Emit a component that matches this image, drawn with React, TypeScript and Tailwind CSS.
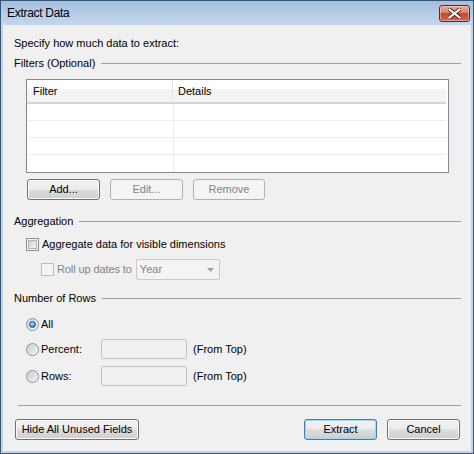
import React from "react";

type BtnProps = {
  label: string;
  widthClass: string;
  disabled?: boolean;
  isDefault?: boolean;
};

function WinButton({ label, widthClass, disabled, isDefault }: BtnProps) {
  const base =
    "h-[21px] rounded-[3px] border flex items-center justify-center text-[11px] leading-none shrink-0";
  if (disabled) {
    return (
      <div className={`${base} ${widthClass} border-[#adb2b5] bg-[#f4f4f4] text-[#838383]`}>
        {label}
      </div>
    );
  }
  if (isDefault) {
    return (
      <div
        className={`${base} ${widthClass} border-[#3c7fb1] bg-[linear-gradient(#f2f2f2,#ebebeb_50%,#dddddd_50%,#cfcfcf)] shadow-[inset_0_0_0_1px_#9fd7f5] text-black`}
      >
        {label}
      </div>
    );
  }
  return (
    <div
      className={`${base} ${widthClass} border-[#707070] bg-[linear-gradient(#f2f2f2,#ebebeb_50%,#dddddd_50%,#cfcfcf)] shadow-[inset_0_0_0_1px_#fcfcfc] text-black`}
    >
      {label}
    </div>
  );
}

function GroupLabel({ label, className }: { label: string; className: string }) {
  return (
    <div className={`flex items-center h-[13px] mr-[10px] ${className}`}>
      <span className="leading-[13px] whitespace-nowrap">{label}</span>
      <span className="flex-1 h-px bg-[#a0a0a0] ml-[6px]" />
    </div>
  );
}

function CheckBox({ disabled }: { disabled?: boolean }) {
  if (disabled) {
    return (
      <span className="w-[13px] h-[13px] border border-[#bcbcbc] bg-[#f4f4f4] shrink-0 block" />
    );
  }
  return (
    <span className="w-[13px] h-[13px] border border-[#8e8f8f] bg-[#f4f4f4] p-[1px] shrink-0 block">
      <span className="block w-full h-full border border-[#aeb3b9] bg-[linear-gradient(135deg,#cbcfd5,#f6f6f6)]" />
    </span>
  );
}

function Radio({ checked }: { checked?: boolean }) {
  return (
    <span className="w-[13px] h-[13px] rounded-full border border-[#8e8f8f] bg-[linear-gradient(135deg,#d0d3d8,#fafafa)] flex items-center justify-center shrink-0">
      {checked ? (
        <span className="w-[7px] h-[7px] rounded-full border border-[#1c4f86] bg-[radial-gradient(circle_at_40%_35%,#c8ecff,#3e9ae0_55%,#1f5da0)]" />
      ) : (
        <span className="w-[9px] h-[9px] rounded-full bg-[linear-gradient(135deg,#c7cbd1,#f4f4f4)]" />
      )}
    </span>
  );
}

function DisabledBox() {
  return <span className="w-[86px] h-[20px] border border-[#c2c2c2] bg-[#f0f0f0] rounded-[2px] shrink-0 block" />;
}

function FilterTable() {
  const rows = [0, 1, 2, 3];
  return (
    <div className="w-[423px] h-[94px] ml-[12px] mt-[9px] border border-[#828790] bg-white flex flex-col">
      <div className="h-[24px] flex bg-[linear-gradient(#ffffff,#ffffff_42%,#f3f4f6_42%,#f3f4f6)] border-b-2 border-[#d5d5d5] mr-[2px]">
        <div className="w-[146px] pl-[6px] flex items-center border-r border-[#e3e5e8] leading-none">
          Filter
        </div>
        <div className="flex-1 pl-[5px] flex items-center leading-none">Details</div>
      </div>
      {rows.map((r) => (
        <div
          key={r}
          className={`h-[17px] flex mr-[2px] ${r < 3 ? "border-b border-[#ededed]" : ""}`}
        >
          <div className="w-[147px] border-r border-[#ededed]" />
          <div className="flex-1" />
        </div>
      ))}
    </div>
  );
}

function CloseButton() {
  return (
    <div className="w-[31px] h-[17px] rounded-[3px] border border-[#6d1f14] bg-[linear-gradient(#e9a99b,#d9816e_45%,#c7472f_50%,#d2664a)] shadow-[inset_0_0_0_1px_rgba(255,210,200,0.55)] flex items-center justify-center">
      <svg width="13" height="11" viewBox="0 0 13 11">
        <path
          d="M1.5 1.5 L11.5 9.5 M11.5 1.5 L1.5 9.5"
          stroke="#5a1a12"
          strokeWidth="4"
          strokeLinecap="square"
        />
        <path
          d="M1.5 1.5 L11.5 9.5 M11.5 1.5 L1.5 9.5"
          stroke="#ffffff"
          strokeWidth="2.2"
          strokeLinecap="square"
        />
      </svg>
    </div>
  );
}

export default function App() {
  return (
    <div className="w-[474px] h-[454px] border border-[#3a5676] bg-[#bcd3ea] flex flex-col text-[11px] text-black font-['Liberation_Sans',Arial,sans-serif]">
      {/* title bar */}
      <div className="h-[24px] flex items-center justify-between pl-[6px] pr-[3px] bg-[linear-gradient(#a3bddc,#b8cfe9_60%,#c1d6ee)]">
        <span className="text-[12px] tracking-[-0.3px] text-black leading-none">Extract Data</span>
        <CloseButton />
      </div>

      {/* client area */}
      <div className="flex-1 mx-[2px] mb-[2px] bg-[#f0f0f0] flex flex-col pl-[11px] pt-[12px]">
        <p className="leading-[13px]">Specify how much data to extract:</p>

        <GroupLabel label="Filters (Optional)" className="mt-[7px]" />
        <FilterTable />

        <div className="flex gap-[10px] ml-[13px] mt-[6px]">
          <WinButton label="Add..." widthClass="w-[73px]" />
          <WinButton label="Edit..." widthClass="w-[73px]" disabled />
          <WinButton label="Remove" widthClass="w-[72px]" disabled />
        </div>

        <GroupLabel label="Aggregation" className="mt-[15px]" />

        <div className="flex items-center h-[13px] mt-[10px] ml-[12px] gap-[3px]">
          <CheckBox />
          <span className="leading-[13px]">Aggregate data for visible dimensions</span>
        </div>

        <div className="flex items-center h-[21px] mt-[8px] ml-[27px]">
          <CheckBox disabled />
          <span className="leading-[13px] text-[#838383] ml-[3px] tracking-[-0.1px]">Roll up dates to</span>
          <div className="ml-[4px] w-[84px] h-[21px] border border-[#c9c9c9] rounded-[2px] bg-[#f4f4f4] flex items-center justify-between pl-[3px] pr-[5px] text-[#838383]">
            <span className="leading-none">Year</span>
            <svg width="7" height="4" viewBox="0 0 7 4">
              <path d="M0 0 H7 L3.5 4 Z" fill="#a0a0a0" />
            </svg>
          </div>
        </div>

        <GroupLabel label="Number of Rows" className="mt-[12px]" />

        <div className="flex items-center h-[13px] mt-[13px] ml-[12px] gap-[2px]">
          <Radio checked />
          <span className="leading-[13px]">All</span>
        </div>

        <div className="flex items-center h-[20px] mt-[8px] ml-[12px]">
          <Radio />
          <span className="leading-[13px] ml-[2px] w-[60px]">Percent:</span>
          <DisabledBox />
          <span className="leading-[13px] ml-[6px]">(From Top)</span>
        </div>

        <div className="flex items-center h-[20px] mt-[7px] ml-[12px]">
          <Radio />
          <span className="leading-[13px] ml-[2px] w-[60px]">Rows:</span>
          <DisabledBox />
          <span className="leading-[13px] ml-[6px]">(From Top)</span>
        </div>

        <div className="h-px bg-[#a0a0a0] mt-[19px] ml-[4px] mr-[10px]" />

        <div className="flex items-center mt-[13px] ml-[1px] mr-[11px]">
          <WinButton label="Hide All Unused Fields" widthClass="w-[124px]" />
          <div className="flex-1" />
          <WinButton label="Extract" widthClass="w-[73px]" isDefault />
          <div className="w-[10px]" />
          <WinButton label="Cancel" widthClass="w-[73px]" />
        </div>
      </div>
    </div>
  );
}
